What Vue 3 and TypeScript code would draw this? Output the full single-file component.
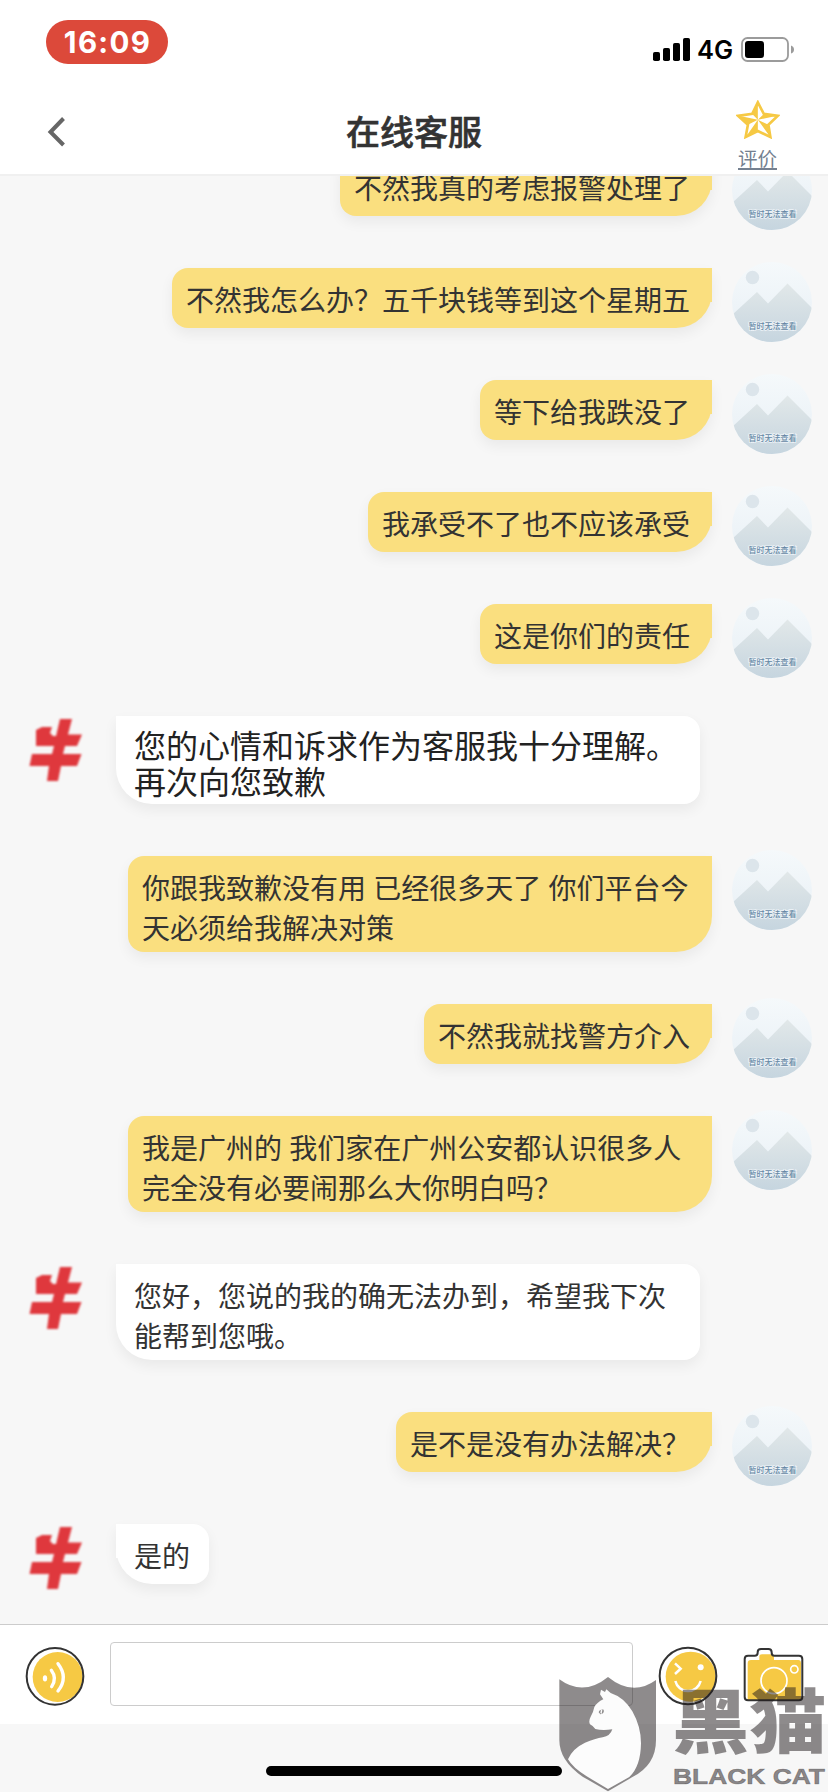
<script setup lang="ts">
interface Message {
  id: number
  from: 'me' | 'agent'
  text: string
  large?: boolean
}

const messages: Message[] = [
  { id: 1, from: 'me', text: '不然我真的考虑报警处理了' },
  { id: 2, from: 'me', text: '不然我怎么办？五千块钱等到这个星期五' },
  { id: 3, from: 'me', text: '等下给我跌没了' },
  { id: 4, from: 'me', text: '我承受不了也不应该承受' },
  { id: 5, from: 'me', text: '这是你们的责任' },
  { id: 6, from: 'agent', text: '您的心情和诉求作为客服我十分理解。再次向您致歉', large: true },
  { id: 7, from: 'me', text: '你跟我致歉没有用 已经很多天了 你们平台今天必须给我解决对策' },
  { id: 8, from: 'me', text: '不然我就找警方介入' },
  { id: 9, from: 'me', text: '我是广州的 我们家在广州公安都认识很多人完全没有必要闹那么大你明白吗？' },
  { id: 10, from: 'agent', text: '您好，您说的我的确无法办到，希望我下次能帮到您哦。' },
  { id: 11, from: 'me', text: '是不是没有办法解决？' },
  { id: 12, from: 'agent', text: '是的' },
]
</script>

<template>
  <div class="screen">
    <header class="top">
      <div class="status">
        <span class="clock">16:09</span>
        <div class="signals">
          <svg class="bars" viewBox="0 0 37 23">
            <rect x="0" y="14" width="7" height="9" rx="1.8" />
            <rect x="10" y="10" width="7" height="13" rx="1.8" />
            <rect x="20" y="5" width="7" height="18" rx="1.8" />
            <rect x="30" y="0" width="7" height="23" rx="1.8" />
          </svg>
          <span class="net">4G</span>
          <svg class="battery" viewBox="0 0 54 25">
            <rect x="1" y="1" width="46" height="23" rx="5.5" fill="none" stroke="#9b9b9b" stroke-width="1.8" />
            <rect x="4" y="4" width="19" height="17" rx="3" fill="#000" />
            <path d="M50 8.5Q53 9.500 53 12.500T50 16.500Z" fill="#9b9b9b" />
          </svg>
        </div>
      </div>
      <nav class="nav">
        <svg class="back" viewBox="0 0 20 32">
          <path d="M16.500 2.500 3.500 16 16.500 29" fill="none" stroke="#666" stroke-width="4" />
        </svg>
        <h1 class="title">在线客服</h1>
        <div class="rate">
          <svg class="star" viewBox="964 301 133 118">
            <path d="M1030 308 1048 343 1090 349 1062 376 1068 413 1030 395 993 413 1000 376 970 349 1013 343Z" fill="#fff" stroke="#f6c944" stroke-width="8" />
            <path d="M1030 306V361L1013 343ZM1092 348 1030 361 1048 343ZM1069 415 1030 361 1062 376ZM992 415 1030 361 1030 395ZM969 348 1030 361 1000 376Z" fill="#f6c944" />
          </svg>
          <span class="rate-text">评价</span>
        </div>
      </nav>
    </header>

    <main class="chat">
      <div v-for="m in messages" :key="m.id" class="row" :class="m.from">
        <svg v-if="m.from === 'agent'" class="logo" viewBox="0 0 60 68">
          <path d="M9 14 15 11H25L23 17 26 20H29L33 3H45L41 18.500H55L50 30H38L36 38H54.500L50 50H34L31 65H20L22 50H2.500L5 38H25L27 30H9Z" fill="#df383d" />
        </svg>
        <div class="bubble" :class="{ large: m.large }">{{ m.text }}</div>
        <svg v-if="m.from === 'me'" class="avatar" viewBox="0 0 80 80">
          <defs>
            <linearGradient :id="'sky' + m.id" x1="0" y1="0" x2="0" y2="1">
              <stop offset="0" stop-color="#f5f9fb" />
              <stop offset="1" stop-color="#e7eff5" />
            </linearGradient>
            <linearGradient :id="'hill' + m.id" x1="0" y1="0" x2="0" y2="1">
              <stop offset="0" stop-color="#e2e8e9" />
              <stop offset="1" stop-color="#c6d5df" />
            </linearGradient>
            <clipPath :id="'disc' + m.id"><circle cx="40" cy="40" r="40" /></clipPath>
          </defs>
          <g :clip-path="`url(#disc${m.id})`">
            <rect width="80" height="80" :fill="`url(#sky${m.id})`" />
            <circle cx="20.500" cy="15.500" r="6.700" fill="#dce5eb" />
            <path d="M0 53 25 30 36 41.500 55.500 21.500 80 46V80H0Z" :fill="`url(#hill${m.id})`" />
            <text class="hint" x="40.500" y="67" text-anchor="middle">暂时无法查看</text>
          </g>
        </svg>
      </div>
    </main>

    <footer class="composer">
      <svg class="tool voice" viewBox="75 137 180 180">
        <circle cx="173" cy="230" r="75" fill="#f6c944" />
        <circle cx="165" cy="228" r="85" fill="none" stroke="#333" stroke-width="6" />
        <ellipse cx="135" cy="234" rx="6.500" ry="9.500" fill="#fff" />
        <path d="M154 210Q172 234 155 259M174 190Q206 231 174 272" fill="none" stroke="#fff" stroke-width="10" stroke-linecap="round" />
      </svg>
      <div class="field"></div>
      <svg class="tool smile" viewBox="354 138 180 180">
        <circle cx="452" cy="230" r="75" fill="#f6c944" />
        <circle cx="444" cy="228" r="85" fill="none" stroke="#333" stroke-width="6" />
        <circle cx="482" cy="202" r="9" fill="#fff" />
        <path d="M405 190 422 206 405 222M406 243A39 39 0 0 0 482 243" fill="none" stroke="#fff" stroke-width="7.500" />
      </svg>
      <svg class="tool camera" viewBox="608 141 183 166">
        <path d="M622 190Q622 180 632 180H657V170Q657 163 665 163H690Q701 163 701 173V180H774Q782 180 782 190V300H622Z" fill="#f6c944" />
        <path d="M613 177Q613 167 623 167H643Q652 167 652 158V156Q652 147 662 147H684Q694 147 694 157V158Q694 167 702 167H776Q786 167 786 177V291Q786 301 776 301H623Q613 301 613 291Z" fill="none" stroke="#333" stroke-width="6" />
        <circle cx="701" cy="242" r="39" fill="none" stroke="#fff" stroke-width="5" />
        <circle cx="762" cy="208" r="11" fill="none" stroke="#fff" stroke-width="5" />
      </svg>
    </footer>
    <div class="home"><span class="home-bar"></span></div>

    <svg class="watermark" viewBox="0 0 864 576">
      <g fill="#1e171a" fill-opacity=".5">
        <path d="M58 238Q130 291 204 231Q278 291 348 240V420Q348 496 276 532L204 574 128 530Q58 482 58 420Z" />
        <text class="mark-cn" x="396" y="444" textLength="464" lengthAdjust="spacingAndGlyphs">黑猫</text>
        <text class="mark-en" x="399" y="553" textLength="456" lengthAdjust="spacingAndGlyphs">BLACK CAT</text>
      </g>
      <path d="M190 298 180 283 183 269 195 276 199 268 212 279Q252 292 277 334Q303 380 303 430Q302 500 268 531L204 567 140 529Q98 503 84 478Q97 446 135 428Q166 416 188 412Q211 408 217 388Q187 393 166 387Q160 378 150 373Q145 363 152 350Q160 337 163 321Q171 307 190 298Z" fill="#fcfcfc" />
      <path d="M176 337Q179 327 191 329Q194 340 181 343Z" fill="#8d8a8b" />
      <path d="M183 328 187 331 185 342 181 339Z" fill="#fcfcfc" />
    </svg>
  </div>
</template>

<style>
body {
  background: #f7f7f7;
}
</style>

<style scoped>
.screen {
  position: relative;
  display: flex;
  flex-direction: column;
  width: 828px;
  height: 1792px;
  overflow: hidden;
  background: #f7f7f7;
  color: #333;
  font-family: "Noto Sans CJK SC", sans-serif;
}
.top {
  flex: none;
  box-sizing: border-box;
  height: 176px;
  background: #fff;
  border-bottom: 2px solid #f0f0f0;
}
.status {
  display: flex;
  justify-content: space-between;
  align-items: flex-start;
  height: 88px;
  padding: 20px 34px 0 46px;
  box-sizing: border-box;
}
.clock {
  width: 122px;
  height: 44px;
  border-radius: 22px;
  background: #dc493a;
  color: #fff;
  font: 700 29.5px/45px Inter, sans-serif;
  letter-spacing: 1.3px;
  text-indent: 1px;
  text-align: center;
}
.signals {
  display: flex;
  align-items: center;
  padding-top: 17px;
}
.bars {
  width: 37px;
  height: 23px;
}
.net {
  width: 37px;
  margin: 0 7px 0 7px;
  color: #000;
  font: 600 25.5px/25px Inter, sans-serif;
}
.battery {
  width: 54px;
  height: 25px;
  margin-right: -1px;
}
.nav {
  display: grid;
  grid-template-columns: 200px 1fr 200px;
  height: 86px;
}
.back {
  width: 20px;
  height: 32px;
  margin: 28px 0 0 47px;
}
.title {
  margin: 0;
  font-size: 34px;
  font-weight: 500;
  line-height: 86px;
  text-align: center;
  -webkit-text-stroke: 0.6px #333;
}
.rate {
  display: flex;
  flex-direction: column;
  align-items: center;
  width: 44px;
  margin: 12px 0 0 107.5px;
}
.star {
  width: 44px;
  height: 39px;
}
.rate-text {
  height: 20px;
  margin-top: 9px;
  border-bottom: 2px solid #748090;
  color: #748090;
  font-size: 19.5px;
  line-height: 20px;
}
.chat {
  flex: none;
  display: flex;
  flex-direction: column;
  justify-content: flex-end;
  gap: 52px;
  height: 1448px;
  box-sizing: border-box;
  padding-bottom: 40px;
  overflow: hidden;
}
.row {
  display: flex;
  align-items: flex-start;
}
.me {
  justify-content: flex-end;
  padding-right: 16px;
}
.agent {
  padding-left: 27px;
}
.bubble {
  position: relative;
  box-sizing: border-box;
  max-width: 584px;
  min-height: 60px;
  padding: 11px 22px 5px 14px;
  border-radius: 16px 0 36px 16px;
  background: #fadf7f;
  box-shadow: 0 6px 14px rgba(0, 0, 0, 0.06);
  font-size: 28px;
  line-height: 40px;
  word-spacing: 1px;
}
.bubble::after {
  content: "";
  position: absolute;
  top: 0;
  right: 0;
  width: 8px;
  height: 34px;
  background: inherit;
}
.agent .bubble {
  padding: 11px 19px 5px 18px;
  border-radius: 0 16px 16px 36px;
  background: #fff;
}
.agent .bubble::after {
  right: auto;
  left: 0;
}
.agent .bubble.large {
  padding: 10px 19px 6px 18px;
  color: #222;
  font-size: 32px;
  line-height: 36px;
}
.avatar {
  flex: none;
  width: 80px;
  height: 80px;
  margin: -6px 0 -20px 20px;
}
.hint {
  fill: #6688a5;
  stroke: #eef4f8;
  stroke-width: 1.5px;
  paint-order: stroke;
  font-size: 8px;
  font-weight: 500;
}
.logo {
  flex: none;
  width: 60px;
  height: 68px;
  margin: 0 29px -8px 0;
  filter: blur(0.9px);
}
.composer {
  flex: none;
  display: flex;
  align-items: flex-start;
  height: 100px;
  box-sizing: border-box;
  border-top: 1px solid #ccc;
  background: #fff;
}
.tool {
  flex: none;
  width: 60px;
  height: 60px;
}
.voice {
  margin: 21px 0 0 25px;
}
.field {
  box-sizing: border-box;
  width: 523px;
  height: 64px;
  margin: 17px 0 0 25px;
  border: 1px solid #ccc;
  border-radius: 4px;
}
.smile {
  margin: 21px 0 0 25px;
}
.camera {
  width: 61px;
  height: 55.3px;
  margin: 22px 0 0 25px;
}
.home {
  display: flex;
  justify-content: center;
  padding-top: 42px;
}
.home-bar {
  width: 296px;
  height: 10px;
  border-radius: 5px;
  background: #000;
}
.watermark {
  position: absolute;
  right: 0;
  bottom: 0;
  width: 288px;
  height: 192px;
}
.mark-cn {
  font-size: 212px;
  font-weight: 900;
}
.mark-en {
  font: 700 68px "Liberation Sans", sans-serif;
  stroke: #1e171a;
  stroke-opacity: 0.4;
  stroke-width: 2px;
}
</style>
